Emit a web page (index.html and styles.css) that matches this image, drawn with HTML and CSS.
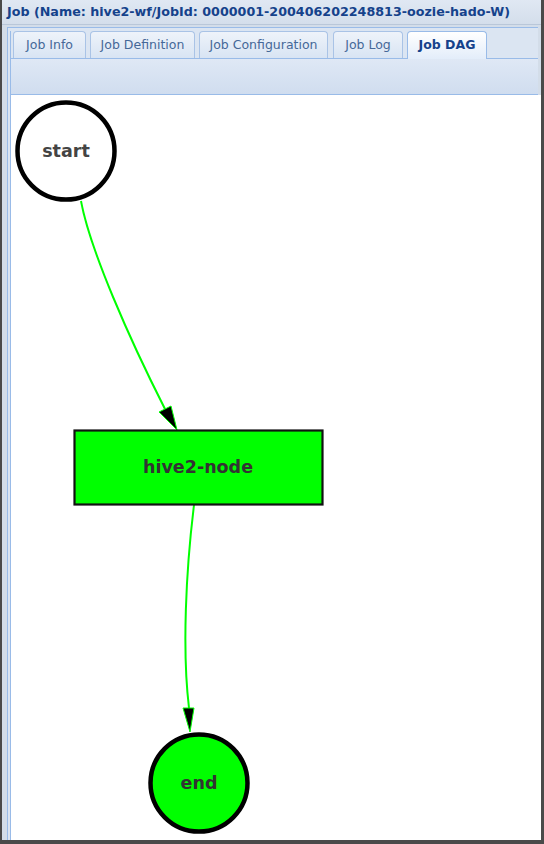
FILE: index.html
```html
<!DOCTYPE html>
<html>
<head>
<meta charset="utf-8">
<link rel="stylesheet" href="styles.css">
</head>
<body>
<div class="win">
  <div class="title">Job (Name: hive2-wf/JobId: 0000001-200406202248813-oozie-hado-W)</div>
  <div class="tabpanel">
    <div class="inner">
      <div class="tabstrip">
        <div class="tab t1">Job Info</div>
        <div class="tab t2">Job Definition</div>
        <div class="tab t3">Job Configuration</div>
        <div class="tab t4">Job Log</div>
        <div class="tab t5 active">Job DAG</div>
      </div>
      <div class="toolbar"></div>
      <div class="canvas">
        <svg class="dag" width="530" height="745" viewBox="11 95 530 745" xmlns="http://www.w3.org/2000/svg">
          <path d="M81,201 C90,250 130,340 165,409" fill="none" stroke="#00ff00" stroke-width="2"/>
          <polygon points="159,412 171,406 177,430" fill="#000" stroke="#00ff00" stroke-width="1"/>
          <path d="M194,505 C186,570 182,650 189,708" fill="none" stroke="#00ff00" stroke-width="2"/>
          <polygon points="183,708 194,708 190,732" fill="#000" stroke="#00ff00" stroke-width="1"/>

          <circle cx="66" cy="151" r="48.5" fill="#fff" stroke="#000" stroke-width="4.5"/>
          <text x="66" y="157" class="lbl lbl-start">start</text>

          <rect x="74.5" y="430.5" width="248" height="74" fill="#00ff00" stroke="#111" stroke-width="2.2"/>
          <text x="198" y="473" class="lbl">hive2-node</text>

          <circle cx="199" cy="783" r="48.5" fill="#00ff00" stroke="#000" stroke-width="4.5"/>
          <text x="199" y="789" class="lbl">end</text>
        </svg>
      </div>
    </div>
  </div>
</div>
</body>
</html>
```

FILE: styles.css
```css
html, body {
  margin: 0;
  padding: 0;
}
body {
  background: #4a4a4a;
  width: 544px;
  height: 844px;
  overflow: hidden;
  font-family: "DejaVu Sans", Verdana, sans-serif;
}
.win {
  margin-left: 2px;
  width: 539px;
  height: 840px;
  background: #d3dde9;
  display: flex;
  flex-direction: column;
}
.title {
  height: 24px;
  line-height: 23px;
  padding-left: 5px;
  font-size: 12.7px;
  font-weight: bold;
  color: #15428b;
  white-space: nowrap;
  background: linear-gradient(#e0e8f3, #d4deeb);
  border-bottom: 1px solid #b9c7d9;
}
.tabpanel {
  margin: 2px 3px 0 5px;
  flex: 1;
  border-left: 1px solid #99bbe8;
  border-top: 1px solid #99bbe8;
  background: #dbe5f2;
  padding: 3px 0 0 2px;
  display: flex;
  flex-direction: column;
}
.inner {
  flex: 1;
  border-left: 1px solid #99bbe8;
  display: flex;
  flex-direction: column;
}
.tabstrip {
  height: 27px;
  display: flex;
  align-items: flex-end;
  gap: 4px;
  padding-left: 2px;
  border-bottom: 1px solid #99bbe8;
  background: #dbe5f2;
}
.tab {
  box-sizing: border-box;
  height: 27px;
  border: 1px solid #a9c3e6;
  border-bottom: none;
  border-radius: 4px 4px 0 0;
  background: linear-gradient(#eef3fa, #d8e4f3);
  color: #456898;
  font-size: 12.5px;
  line-height: 26px;
  text-align: center;
  white-space: nowrap;
}
.t1 { width: 73px; }
.t2 { width: 105px; }
.t3 { width: 129px; }
.t4 { width: 70px; margin-left: 1px; }
.t5 { width: 80px; }
.tab.active {
  height: 28px;
  margin-bottom: -1px;
  background: linear-gradient(#ffffff, #e3edfa);
  border-color: #99bbe8;
  color: #15428b;
  font-weight: bold;
}
.toolbar {
  height: 35px;
  background: linear-gradient(#dfe8f5, #d0ddef);
  border-bottom: 1px solid #99bbe8;
}
.canvas {
  flex: 1;
  background: #fff;
  margin-right: -3px;
  overflow: hidden;
}
.dag {
  display: block;
}
.lbl {
  font-family: "DejaVu Sans", sans-serif;
  font-weight: bold;
  font-size: 17.5px;
  fill: #333;
  text-anchor: middle;
}
.lbl-start {
  fill: #444;
}
```
